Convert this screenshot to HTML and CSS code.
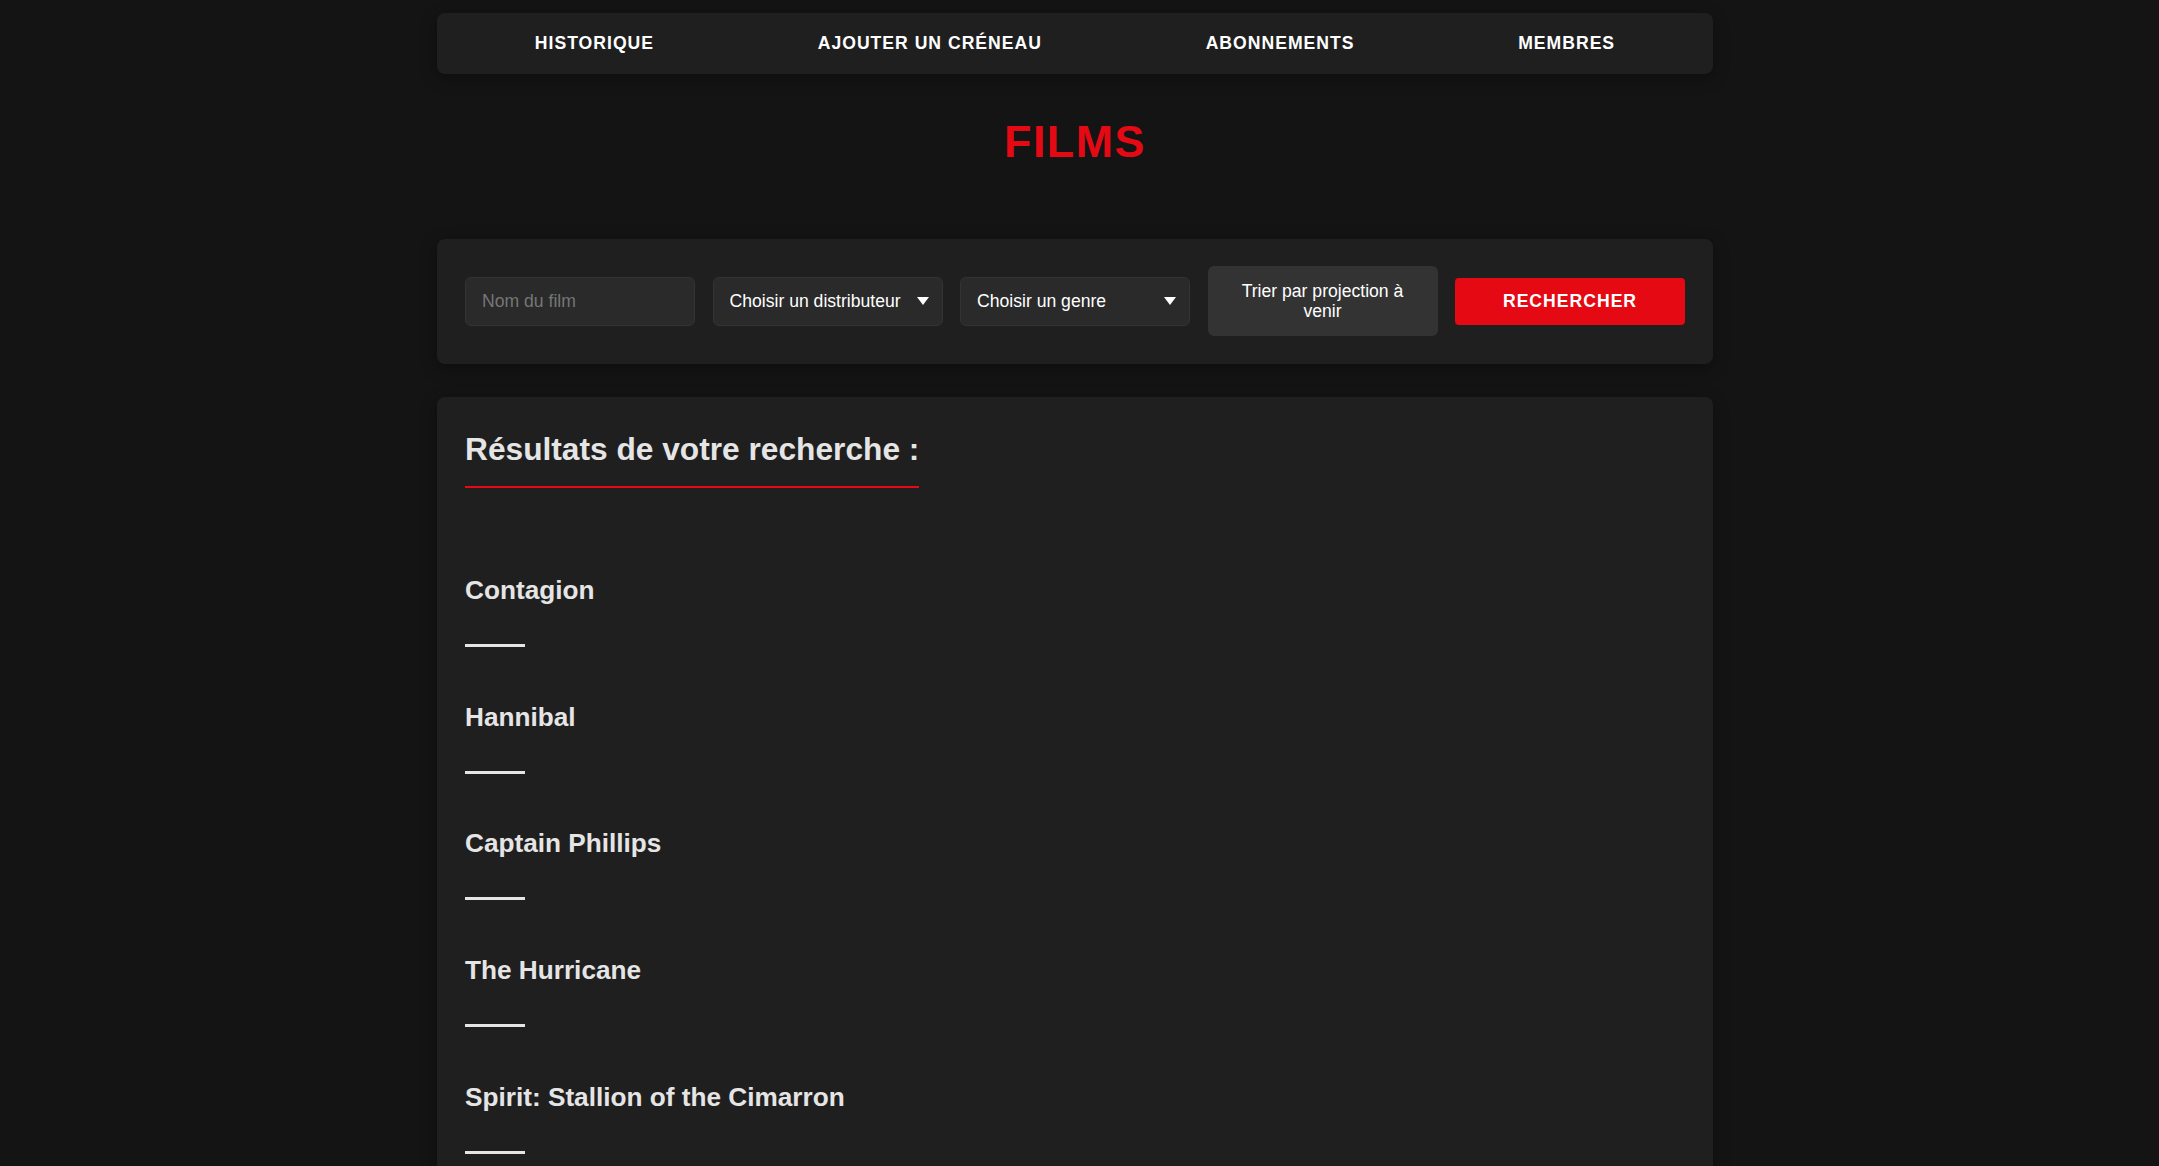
FILE: index.html
```html
<!DOCTYPE html>
<html lang="fr">
<head>
<meta charset="utf-8">
<title>Films</title>
<link rel="stylesheet" href="styles.css">
</head>
<body>
<div class="page">
  <nav class="nav">
    <a class="nav-link" href="#">Historique</a>
    <a class="nav-link" href="#">Ajouter un créneau</a>
    <a class="nav-link" href="#">Abonnements</a>
    <a class="nav-link" href="#">Membres</a>
  </nav>

  <h1 class="title">FILMS</h1>

  <form class="filters">
    <input class="field" type="text" placeholder="Nom du film">
    <div class="select-wrap">
      <select class="field select">
        <option>Choisir un distributeur</option>
      </select>
    </div>
    <div class="select-wrap">
      <select class="field select">
        <option>Choisir un genre</option>
      </select>
    </div>
    <button type="button" class="btn-sort">Trier par projection à venir</button>
    <button type="button" class="btn-search">RECHERCHER</button>
  </form>

  <section class="results">
    <h2 class="results-title">Résultats de votre recherche :</h2>
    <div class="film-list">
      <div class="film"><h3 class="film-name">Contagion</h3><span class="film-line"></span></div>
      <div class="film"><h3 class="film-name">Hannibal</h3><span class="film-line"></span></div>
      <div class="film"><h3 class="film-name">Captain Phillips</h3><span class="film-line"></span></div>
      <div class="film"><h3 class="film-name">The Hurricane</h3><span class="film-line"></span></div>
      <div class="film"><h3 class="film-name">Spirit: Stallion of the Cimarron</h3><span class="film-line"></span></div>
    </div>
  </section>
</div>
</body>
</html>
```

FILE: styles.css
```css
* {
  box-sizing: border-box;
}

html, body {
  background: #141414;
}

body {
  margin: 0;
  padding: 0 9px 0 0;
  font-family: "Liberation Sans", Arial, sans-serif;
  color: #ffffff;
}

.page {
  width: 1276px;
  margin: 0 auto;
  padding-top: 13px;
}

.nav {
  height: 61px;
  background: #1f1f1f;
  border-radius: 8px;
  box-shadow: 0 4px 16px rgba(0, 0, 0, 0.35);
  display: flex;
  align-items: center;
  justify-content: space-around;
  padding: 0 16px;
}

.nav-link {
  color: #ffffff;
  text-decoration: none;
  text-transform: uppercase;
  font-weight: 700;
  font-size: 17.6px;
  letter-spacing: 1px;
}

.title {
  margin: 42px 0 71.5px;
  text-align: center;
  color: #e50914;
  font-size: 44.8px;
  font-weight: 700;
  letter-spacing: 1.5px;
  line-height: normal;
}

.filters {
  margin: 0;
  background: #1f1f1f;
  border-radius: 8px;
  box-shadow: 0 4px 16px rgba(0, 0, 0, 0.35);
  padding: 27.5px 28px;
  display: grid;
  grid-template-columns: repeat(5, minmax(0, 1fr));
  align-items: center;
  column-gap: 17.5px;
}

.field {
  display: block;
  width: 100%;
  height: 49px;
  margin: 0;
  padding: 0 16px;
  background: #2a2a2a;
  border: 1px solid #333333;
  border-radius: 6px;
  color: #ffffff;
  font-family: "Liberation Sans", Arial, sans-serif;
  font-size: 17.6px;
  outline: none;
}

.field::placeholder {
  color: #767676;
}

.select-wrap {
  position: relative;
  min-width: 0;
}

.select {
  appearance: none;
  -webkit-appearance: none;
  padding-right: 30px;
}

.select-wrap::after {
  content: "";
  position: absolute;
  right: 14px;
  top: 50%;
  margin-top: -4px;
  width: 0;
  height: 0;
  border-left: 6.5px solid transparent;
  border-right: 6.5px solid transparent;
  border-top: 8px solid #ffffff;
  pointer-events: none;
}

.btn-sort {
  width: 100%;
  margin: 0;
  background: #333333;
  color: #ffffff;
  border: none;
  border-radius: 6px;
  padding: 15px 16px;
  font-family: "Liberation Sans", Arial, sans-serif;
  font-size: 17.6px;
  line-height: 20px;
  text-align: center;
}

.btn-search {
  width: 100%;
  margin: 0;
  background: #e50914;
  color: #ffffff;
  border: none;
  border-radius: 4px;
  height: 47px;
  padding: 0 16px;
  font-family: "Liberation Sans", Arial, sans-serif;
  font-size: 17.6px;
  font-weight: 700;
  letter-spacing: 1px;
  line-height: 20px;
}

.results {
  margin-top: 33px;
  background: #1f1f1f;
  border-radius: 8px;
  box-shadow: 0 4px 16px rgba(0, 0, 0, 0.35);
  padding: 34.5px 28px 40px;
}

.results-title {
  display: inline-block;
  margin: 0;
  padding-bottom: 17.7px;
  border-bottom: 2px solid #e50914;
  color: #e5e5e5;
  font-size: 31.7px;
  font-weight: 700;
  line-height: normal;
}

.film-list {
  margin-top: 87.3px;
  display: flex;
  flex-direction: column;
  gap: 54.7px;
}

.film {
  display: flex;
  flex-direction: column;
  align-items: flex-start;
}

.film-name {
  margin: 0 0 38px;
  color: #e5e5e5;
  font-size: 26.2px;
  font-weight: 700;
  line-height: normal;
}

.film-line {
  display: block;
  width: 60px;
  height: 3px;
  background: #e5e5e5;
}
```
